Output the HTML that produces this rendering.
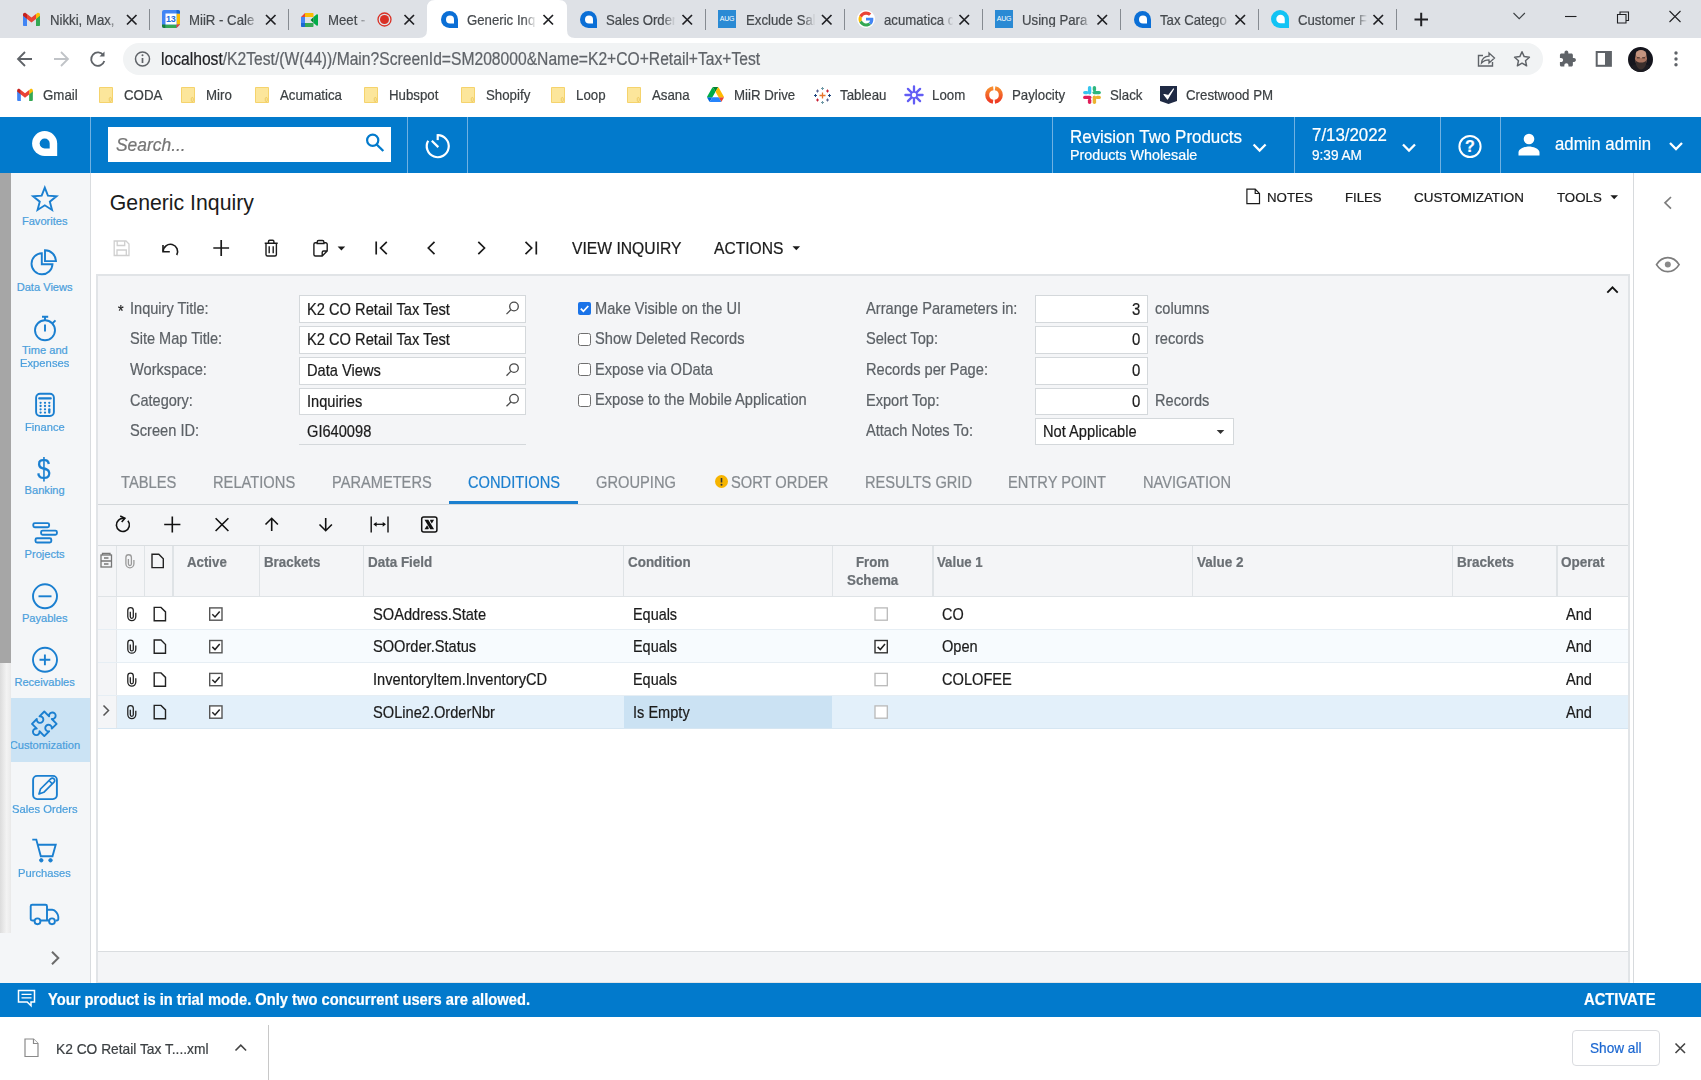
<!DOCTYPE html>
<html><head><meta charset="utf-8">
<style>
*{box-sizing:border-box;margin:0;padding:0}
html,body{width:1701px;height:1080px;overflow:hidden;background:#fff;font-family:"Liberation Sans",sans-serif;}
.abs{position:absolute}
.t{position:absolute;white-space:nowrap;line-height:1;-webkit-text-stroke:.22px}
svg{position:absolute;overflow:visible}
#tabstrip{left:0;top:0;width:1701px;height:38px;background:#dee1e6}
.tabt{font-size:15px;color:#45494d;top:11.6px;overflow:hidden;transform:scaleX(.88);transform-origin:0 0;width:79px;-webkit-mask-image:linear-gradient(90deg,#000 calc(100% - 14px),transparent);mask-image:linear-gradient(90deg,#000 calc(100% - 14px),transparent)}
.sep{width:1px;height:21px;top:9px;background:#868b91}
.bm{font-size:15px;color:#3c4043;top:87px;transform:scaleX(.885);transform-origin:0 0}
#hdr{left:0;top:116px;width:1701px;height:57px;background:#027acc}
.hdiv{top:116px;width:1px;height:57px;background:rgba(255,255,255,.4)}
#side{left:0;top:173px;width:90px;height:810px;background:#f5f6f8}
.sl{position:absolute;font-size:12.5px;color:#3d9ad9;text-align:center;width:90px;left:0;line-height:13px;white-space:nowrap}
.lbl{font-size:16px;color:#5a6065}
.val{font-size:16px;color:#1c1c1c}
.inp{position:absolute;background:#fff;border:1px solid #d4d8dc;height:28px}
.tab{font-size:16px;color:#878d92;top:474px}
.th{font-size:14px;font-weight:bold;color:#6a7075;top:555px}
.td{font-size:16px;color:#1c1c1c}
</style></head><body>
<div id="tabstrip" class="abs"></div>
<!-- active tab -->
<svg style="left:419px;top:0" width="156" height="38" viewBox="0 0 156 38"><path d="M0 38 Q8 38 8 30 L8 8 Q8 0 16 0 L140 0 Q148 0 148 8 L148 30 Q148 38 156 38 Z" fill="#fff"/></svg>
<!-- separators -->
<div class="abs sep" style="left:149px"></div><div class="abs sep" style="left:288px"></div>
<div class="abs sep" style="left:705px"></div><div class="abs sep" style="left:844px"></div><div class="abs sep" style="left:982px"></div>
<div class="abs sep" style="left:1120px"></div><div class="abs sep" style="left:1258px"></div><div class="abs sep" style="left:1395.500px"></div>
<!-- tab titles -->
<div class="t tabt" style="left:50px;" id="tt1">Nikki, Max,</div>
<div class="t tabt" style="left:189px;" id="tt2">MiiR - Cale</div>
<div class="t tabt" style="left:328px;width:46px" id="tt3">Meet -</div>
<div class="t tabt" style="left:467px;" id="tt4">Generic Inq</div>
<div class="t tabt" style="left:606px;" id="tt5">Sales Order</div>
<div class="t tabt" style="left:746px;" id="tt6">Exclude Sal</div>
<div class="t tabt" style="left:884px;" id="tt7">acumatica c</div>
<div class="t tabt" style="left:1022px;" id="tt8">Using Para</div>
<div class="t tabt" style="left:1160px;" id="tt9">Tax Catego</div>
<div class="t tabt" style="left:1298px;" id="tt10">Customer F</div>
<!-- tab close X's -->
<svg style="left:0;top:0" width="1701" height="38" viewBox="0 0 1701 38" fill="none" stroke="#202124" stroke-width="1.7">
<g id="xs">
<path d="M127 15l9.5 9.5M136.5 15l-9.5 9.5"/>
<path d="M266 15l9.5 9.5M275.5 15l-9.5 9.5"/>
<path d="M404.5 15l9.5 9.5M414 15l-9.5 9.5"/>
<path d="M543.5 15l9.5 9.5M553 15l-9.5 9.5"/>
<path d="M682.5 15l9.5 9.5M692 15l-9.5 9.5"/>
<path d="M822 15l9.5 9.5M831.5 15l-9.5 9.5"/>
<path d="M959.5 15l9.5 9.5M969 15l-9.5 9.5"/>
<path d="M1097.5 15l9.5 9.5M1107 15l-9.5 9.5"/>
<path d="M1235.5 15l9.5 9.5M1245 15l-9.5 9.5"/>
<path d="M1373.5 15l9.5 9.5M1383 15l-9.5 9.5"/>
</g>
<!-- new tab plus -->
<path d="M1414.5 19.5h13.5M1421.2 12.7v13.5" stroke-width="2"/>
<!-- window controls -->
<path d="M1513.5 13l5.7 5.7 5.7-5.7" stroke-width="1.1" stroke="#3c4043"/>
<path d="M1565 16.5h11.5" stroke-width="1.1"/>
<path d="M1617.5 14.5h8.5v8.5h-8.5zM1620 14.5v-2.5h8.5v8.5h-2.5" stroke-width="1.1"/>
<path d="M1669.5 11l11 11M1680.5 11l-11 11" stroke-width="1.1"/>
</svg>
<!-- Gmail icon tab1 -->
<svg style="left:23px;top:13px" width="17" height="13" viewBox="0 0 17 13"><path d="M0 1.5v10.5c0 .6.4 1 1 1h3V5.5z" fill="#4285f4"/><path d="M13 13h3c.6 0 1-.4 1-1V1.500l-4 4z" fill="#34a853"/><path d="M13 1l0 5 4-3.200V1.600c0-1.500-1.700-2.300-2.900-1.400z" fill="#fbbc04"/><path d="M4 6V1l4.500 3.500L13 1v5l-4.500 3.500z" fill="#ea4335"/><path d="M0 1.600v1.200l4 3.200V1L2.900.2C1.700-.7 0 .1 0 1.600z" fill="#c5221f"/></svg>
<!-- Calendar icon tab2 -->
<svg style="left:162px;top:10px" width="18" height="18" viewBox="0 0 18 18"><path d="M2 0h14a2 2 0 0 1 2 2v12.500l-3.500 3.500H2a2 2 0 0 1-2-2V2a2 2 0 0 1 2-2z" fill="#4285f4"/><rect x="14.500" y="3.500" width="3.500" height="11" fill="#fbbc04"/><rect x="3.500" y="14.500" width="11" height="3.500" fill="#34a853"/><path d="M0 14.500h3.500v3.500H2a2 2 0 0 1-2-2z" fill="#188038"/><path d="M14.500 18l3.500-3.500h-3.500z" fill="#ea4335"/><path d="M14.500 0H16a2 2 0 0 1 2 2v1.500h-3.500z" fill="#1967d2"/><rect x="3.500" y="3.500" width="11" height="11" fill="#fff"/><text x="8.800" y="12.400" font-size="9" font-weight="bold" fill="#1a6be0" text-anchor="middle" font-family="Liberation Sans" letter-spacing="-0.300">13</text></svg>
<!-- Meet icon tab3 -->
<svg style="left:301px;top:12.700px" width="17" height="14" viewBox="0 0 17 14"><path d="M0 4h4V0z" fill="#ea4335"/><path d="M4 0h7.500c.6 0 1 .4 1 1v3H4z" fill="#fbbc04"/><path d="M0 4h4v6H0z" fill="#4285f4"/><path d="M0 10h4v4H1c-.6 0-1-.4-1-1z" fill="#1967d2"/><path d="M4 10h8.500v3c0 .6-.4 1-1 1H4z" fill="#34a853"/><path d="M4 4h8.500v6H4z" fill="#fff" opacity="0"/><path d="M12.500 4v6l3.300 2.700c.5.400 1.200 0 1.200-.6V1.900c0-.6-.7-1-1.200-.6z" fill="#00ac47"/><path d="M9.500 7l3-3v6z" fill="#00832d"/></svg>
<!-- record dot -->
<svg style="left:377px;top:12px" width="15" height="15" viewBox="0 0 15 15"><circle cx="7.500" cy="7.500" r="6.500" fill="none" stroke="#d93025" stroke-width="1.300"/><circle cx="7.500" cy="7.500" r="4.500" fill="#d93025"/></svg>
<!-- Acumatica tab icons -->
<svg style="left:441px;top:11px" width="17" height="17" viewBox="0 0 17 17"><path d="M8.500 0A8.500 8.500 0 1 0 8.500 17H17V8.500A8.500 8.500 0 0 0 8.500 0z" fill="#0b6fd6"/><path d="M9 4.500a4 4 0 1 0 0 8h4V8.500a4 4 0 0 0-4-4z" fill="#fff"/></svg>
<svg style="left:580px;top:11px" width="17" height="17" viewBox="0 0 17 17"><path d="M8.500 0A8.500 8.500 0 1 0 8.500 17H17V8.500A8.500 8.500 0 0 0 8.500 0z" fill="#0b6fd6"/><path d="M9 4.500a4 4 0 1 0 0 8h4V8.500a4 4 0 0 0-4-4z" fill="#fff"/></svg>
<svg style="left:1134px;top:11px" width="17" height="17" viewBox="0 0 17 17"><path d="M8.500 0A8.500 8.500 0 1 0 8.500 17H17V8.500A8.500 8.500 0 0 0 8.500 0z" fill="#0b6fd6"/><path d="M9 4.500a4 4 0 1 0 0 8h4V8.500a4 4 0 0 0-4-4z" fill="#fff"/></svg>
<svg style="left:1271px;top:10px" width="18" height="18" viewBox="0 0 17 17"><path d="M8.500 0A8.500 8.500 0 1 0 8.500 17H17V8.500A8.500 8.500 0 0 0 8.500 0z" fill="#12c3f4"/><path d="M9 4.500a4 4 0 1 0 0 8h4V8.500a4 4 0 0 0-4-4z" fill="#fff"/></svg>
<!-- AUG icons -->
<div class="abs" style="left:718px;top:10px;width:18px;height:18px;background:#2a8ad4;color:#fff;font-size:7px;line-height:18px;text-align:center;letter-spacing:-0.300px">AUG</div>
<div class="abs" style="left:995px;top:10px;width:18px;height:18px;background:#2a8ad4;color:#fff;font-size:7px;line-height:18px;text-align:center;letter-spacing:-0.300px">AUG</div>
<!-- Google G -->
<svg style="left:857px;top:10px" width="18" height="18" viewBox="0 0 48 48"><circle cx="24" cy="24" r="24" fill="#fff"/><path fill="#EA4335" d="M24 12.500c3.100 0 5.900 1.100 8.100 3.100l6-6C34.500 6.200 29.600 4 24 4 16.200 4 9.500 8.500 6.200 15l7 5.400c1.700-4.600 5.900-7.900 10.800-7.900z"/><path fill="#4285F4" d="M43.600 24.500c0-1.400-.1-2.700-.4-4H24v7.600h11c-.5 2.500-1.900 4.700-4.100 6.100l6.700 5.200c3.900-3.600 6-8.900 6-14.900z"/><path fill="#FBBC05" d="M13.200 27.600c-.4-1.200-.7-2.400-.7-3.600s.2-2.500.7-3.600l-7-5.400C4.800 17.800 4 20.800 4 24s.8 6.200 2.200 9z"/><path fill="#34A853" d="M24 44c5.400 0 10-1.800 13.300-4.800l-6.700-5.200c-1.800 1.200-4.100 2-6.600 2-5 0-9.200-3.400-10.800-7.900l-7 5.400C9.500 39.500 16.200 44 24 44z"/></svg>
<!-- toolbar -->
<div class="abs" style="left:123px;top:43px;width:1420px;height:32px;border-radius:16px;background:#f1f3f4"></div>
<svg style="left:0;top:38px" width="1701" height="42" viewBox="0 38 1701 42" fill="none" stroke="#5f6368" stroke-width="1.8">
<!-- back -->
<path d="M32 59H18.500M25 52l-7 7 7 7"/>
<!-- forward -->
<path d="M54 59h13.500M61 52l7 7-7 7" stroke="#c0c3c7"/>
<!-- reload -->
<path d="M103.500 55.500A6.700 6.700 0 1 0 104.300 61" /><path d="M104.500 51.500v5h-5z" fill="#5f6368" stroke="none"/>
<!-- info -->
<circle cx="142.500" cy="59" r="7" stroke-width="1.500"/><path d="M142.500 58v5" stroke-width="1.700"/><circle cx="142.500" cy="55.300" r="1" fill="#5f6368" stroke="none"/>
<!-- share -->
<path d="M1483 55.500h-4.500v10.500h14v-4" stroke-width="1.400"/><path d="M1481.500 63c.5-4.500 3.500-6.700 7.500-6.800v-3.200l5.500 5-5.500 5v-3.200c-3.500 0-5.500 1-7.500 3.200z" stroke-width="1.300"/>
<!-- star -->
<path d="M1522 51.800l2.200 4.800 5.200.6-3.900 3.500 1.100 5.100-4.600-2.600-4.600 2.600 1.100-5.100-3.900-3.500 5.200-.6z" stroke-width="1.500" stroke-linejoin="round"/>
<!-- puzzle -->
<g transform="translate(1558.400 49.700) scale(.762)"><path d="M20.500 11H19V7c0-1.100-.9-2-2-2h-4V3.500C13 2.120 11.880 1 10.500 1S8 2.120 8 3.500V5H4c-1.100 0-1.990.9-1.990 2v3.800H3.500c1.490 0 2.700 1.210 2.700 2.700s-1.210 2.700-2.700 2.700H2V20c0 1.100.9 2 2 2h3.800v-1.500c0-1.490 1.210-2.700 2.700-2.700 1.490 0 2.700 1.210 2.700 2.700V22H17c1.100 0 2-.9 2-2v-4h1.500c1.380 0 2.500-1.120 2.500-2.500S21.880 11 20.500 11z" fill="#5f6368" stroke="none"/></g>
<!-- side panel -->
<rect x="1596.700" y="52" width="14.200" height="13.800" stroke-width="2"/><rect x="1605" y="52" width="6" height="13.800" fill="#5f6368" stroke="none"/>
<!-- kebab -->
<g fill="#5f6368" stroke="none"><circle cx="1676" cy="53" r="1.700"/><circle cx="1676" cy="59" r="1.700"/><circle cx="1676" cy="64.800" r="1.700"/></g>
</svg>
<!-- avatar -->
<svg style="left:1627.700px;top:46.500px" width="25" height="25" viewBox="0 0 25 25"><defs><clipPath id="avc"><circle cx="12.500" cy="12.500" r="12.500"/></clipPath></defs><g clip-path="url(#avc)"><rect width="25" height="25" fill="#15151d"/><path d="M0 25c1-5 4-7 8-8h9c4 1 7 3 8 8z" fill="#1d1c22"/><ellipse cx="13" cy="11.500" rx="6" ry="8" fill="#a8735f"/><ellipse cx="13" cy="7" rx="5.300" ry="4" fill="#c49480"/><path d="M7.300 13c.5 6 2.700 9.500 5.700 9.500s5.200-3.500 5.700-9.500c-1.500 2-3.300 2.500-5.700 2.500s-4.200-.5-5.700-2.500z" fill="#3a2e2c"/><path d="M9 10.800h2.800M14.200 10.800H17" stroke="#3a2a26" stroke-width="1"/></g></svg>
<!-- URL -->
<div class="t" style="left:161px;top:51px;font-size:17.500px;color:#5f6368;transform:scaleX(.894);transform-origin:0 0"><span style="color:#202124">localhost</span>/K2Test/(W(44))/Main?ScreenId=SM208000&amp;Name=K2+CO+Retail+Tax+Test</div>
<!-- bookmarks -->
<svg style="left:17px;top:89px" width="16" height="12" viewBox="0 0 17 13"><path d="M0 1.500v10.500c0 .6.400 1 1 1h3V5.500z" fill="#4285f4"/><path d="M13 13h3c.6 0 1-.4 1-1V1.500l-4 4z" fill="#34a853"/><path d="M13 1l0 5 4-3.200V1.600c0-1.500-1.700-2.300-2.900-1.400z" fill="#fbbc04"/><path d="M4 6V1l4.500 3.500L13 1v5l-4.500 3.500z" fill="#ea4335"/><path d="M0 1.600v1.200l4 3.200V1L2.900.2C1.700-.7 0 .1 0 1.600z" fill="#c5221f"/></svg>
<div class="t bm" style="left:43px">Gmail</div>
<svg style="left:98.5px;top:87px" width="14" height="16" viewBox="0 0 14 16"><path d="M.5 .5h8.500l4.500 0v15h-13z" fill="#fce69b" stroke="#f5d36c" stroke-width="1"/><rect x="10.300" y="10.500" width="2" height="4" rx="1" fill="none" stroke="#e8c24f" stroke-width=".7"/></svg>
<div class="t bm" style="left:123.5px">CODA</div>
<svg style="left:181px;top:87px" width="14" height="16" viewBox="0 0 14 16"><path d="M.5 .5h8.500l4.500 0v15h-13z" fill="#fce69b" stroke="#f5d36c" stroke-width="1"/><rect x="10.300" y="10.500" width="2" height="4" rx="1" fill="none" stroke="#e8c24f" stroke-width=".7"/></svg>
<div class="t bm" style="left:206px">Miro</div>
<svg style="left:255px;top:87px" width="14" height="16" viewBox="0 0 14 16"><path d="M.5 .5h8.500l4.500 0v15h-13z" fill="#fce69b" stroke="#f5d36c" stroke-width="1"/><rect x="10.300" y="10.500" width="2" height="4" rx="1" fill="none" stroke="#e8c24f" stroke-width=".7"/></svg>
<div class="t bm" style="left:279.5px">Acumatica</div>
<svg style="left:363.5px;top:87px" width="14" height="16" viewBox="0 0 14 16"><path d="M.5 .5h8.500l4.500 0v15h-13z" fill="#fce69b" stroke="#f5d36c" stroke-width="1"/><rect x="10.300" y="10.500" width="2" height="4" rx="1" fill="none" stroke="#e8c24f" stroke-width=".7"/></svg>
<div class="t bm" style="left:388.5px">Hubspot</div>
<svg style="left:460.5px;top:87px" width="14" height="16" viewBox="0 0 14 16"><path d="M.5 .5h8.500l4.500 0v15h-13z" fill="#fce69b" stroke="#f5d36c" stroke-width="1"/><rect x="10.300" y="10.500" width="2" height="4" rx="1" fill="none" stroke="#e8c24f" stroke-width=".7"/></svg>
<div class="t bm" style="left:485.5px">Shopify</div>
<svg style="left:550.5px;top:87px" width="14" height="16" viewBox="0 0 14 16"><path d="M.5 .5h8.500l4.500 0v15h-13z" fill="#fce69b" stroke="#f5d36c" stroke-width="1"/><rect x="10.300" y="10.500" width="2" height="4" rx="1" fill="none" stroke="#e8c24f" stroke-width=".7"/></svg>
<div class="t bm" style="left:576px">Loop</div>
<svg style="left:626.5px;top:87px" width="14" height="16" viewBox="0 0 14 16"><path d="M.5 .5h8.500l4.500 0v15h-13z" fill="#fce69b" stroke="#f5d36c" stroke-width="1"/><rect x="10.300" y="10.500" width="2" height="4" rx="1" fill="none" stroke="#e8c24f" stroke-width=".7"/></svg>
<div class="t bm" style="left:652px">Asana</div>
<svg style="left:707px;top:87px" width="17" height="15" viewBox="0 0 87.3 78"><path d="m6.600 66.850 3.850 6.650c.8 1.400 1.950 2.500 3.300 3.300l13.750-23.800h-27.500c0 1.550.4 3.100 1.200 4.500z" fill="#0066da"/><path d="m43.650 25-13.750-23.800c-1.350.8-2.500 1.900-3.300 3.300l-25.400 44a9.060 9.060 0 0 0 -1.200 4.500h27.500z" fill="#00ac47"/><path d="m73.550 76.800c1.350-.8 2.500-1.900 3.300-3.300l1.600-2.750 7.650-13.250c.8-1.400 1.200-2.950 1.200-4.500h-27.502l5.852 11.500z" fill="#ea4335"/><path d="m43.650 25 13.750-23.800c-1.350-.8-2.900-1.200-4.500-1.200h-18.500c-1.600 0-3.150.45-4.500 1.200z" fill="#00832d"/><path d="m59.800 53h-32.300l-13.750 23.800c1.350.8 2.900 1.200 4.500 1.200h50.800c1.600 0 3.150-.45 4.500-1.200z" fill="#2684fc"/><path d="m73.400 26.500-12.700-22c-.8-1.400-1.950-2.500-3.300-3.300l-13.750 23.800 16.150 28h27.450c0-1.550-.4-3.100-1.200-4.500z" fill="#ffba00"/></svg>
<div class="t bm" style="left:733.5px">MiiR Drive</div>
<svg style="left:814px;top:87px" width="17" height="17" viewBox="0 0 17 17" fill="none"><path d="M8.500 5.500v6M5.500 8.500h6" stroke="#e8762d" stroke-width="1.300"/><path d="M8.500 0v3M7 1.500h3M8.500 14v3M7 15.500h3" stroke="#7099a6" stroke-width="1"/><path d="M1.500 7v3M0 8.500h3M15.500 7v3M14 8.500h3" stroke="#1f457e" stroke-width="1"/><path d="M3.500 2.500v3M2 4h3M13.500 11.500v3M12 13h3" stroke="#5b6591" stroke-width="1"/><path d="M13.500 2.500v3M12 4h3M3.500 11.500v3M2 13h3" stroke="#c72035" stroke-width="1"/></svg>
<div class="t bm" style="left:840px">Tableau</div>
<svg style="left:904.5px;top:86px" width="18" height="18" viewBox="0 0 18 18" fill="none"><path d="M12.00 9.00L17.60 9.00M11.12 11.12L15.08 15.08M9.00 12.00L9.00 17.60M6.88 11.12L2.92 15.08M6.00 9.00L0.40 9.00M6.88 6.88L2.92 2.92M9.00 6.00L9.00 0.40M11.12 6.88L15.08 2.92" stroke="#625df5" stroke-width="2.300" stroke-linecap="round"/><circle cx="9" cy="9" r="3" fill="#fff" stroke="#625df5" stroke-width="1.600"/></svg>
<div class="t bm" style="left:932px">Loom</div>
<svg style="left:985px;top:86px" width="18" height="18" viewBox="0 0 18 18"><defs><linearGradient id="pg" x1="0" y1="0" x2="0" y2="1"><stop offset="0" stop-color="#f78b2d"/><stop offset="1" stop-color="#ee3a24"/></linearGradient></defs><circle cx="9" cy="9" r="6.800" fill="none" stroke="url(#pg)" stroke-width="4" stroke-dasharray="19.500 1.860" stroke-dashoffset="9.750"/></svg>
<div class="t bm" style="left:1012px">Paylocity</div>
<svg style="left:1083px;top:86px" width="18" height="18" viewBox="0 0 18 18" fill="none" stroke-width="3.400" stroke-linecap="round"><path d="M6.600 1.800v5" stroke="#36c5f0"/><path d="M1.800 6.600h2" stroke="#36c5f0"/><path d="M11.400 1.800v2" stroke="#2eb67d"/><path d="M11.200 6.600h5" stroke="#2eb67d"/><path d="M11.400 11.200v5" stroke="#ecb22e"/><path d="M14.200 11.400h2" stroke="#ecb22e"/><path d="M1.800 11.400h5" stroke="#e01e5a"/><path d="M6.600 14.200v2" stroke="#e01e5a"/></svg>
<div class="t bm" style="left:1110px">Slack</div>
<svg style="left:1160px;top:86px" width="17" height="18" viewBox="0 0 17 18"><path d="M0 0h17v15l-8.500 3L0 15z" fill="#1f2a44"/><path d="M4 8.500l3.500 4.500L13.500 3l-5 6.500z" fill="#fff" stroke="#fff" stroke-width="1.200" stroke-linejoin="round"/></svg>
<div class="t bm" style="left:1186px">Crestwood PM</div>
<!-- ACU HEADER -->
<div class="abs" style="left:0px;top:116.5px;width:1701px;height:56.5px;background:#027acc;"></div>
<div class="abs" style="left:89.5px;top:116.5px;width:1.3px;height:56.5px;background:#6fb1e2;"></div>
<div class="abs" style="left:407px;top:116.5px;width:1.3px;height:56.5px;background:#6fb1e2;"></div>
<div class="abs" style="left:467px;top:116.5px;width:1.3px;height:56.5px;background:#6fb1e2;"></div>
<div class="abs" style="left:1052px;top:116.5px;width:1.3px;height:56.5px;background:#6fb1e2;"></div>
<div class="abs" style="left:1294px;top:116.5px;width:1.3px;height:56.5px;background:#6fb1e2;"></div>
<div class="abs" style="left:1440px;top:116.5px;width:1.3px;height:56.5px;background:#6fb1e2;"></div>
<div class="abs" style="left:1499.5px;top:116.5px;width:1.3px;height:56.5px;background:#6fb1e2;"></div>
<svg style="left:31.7px;top:131.4px" width="25.2" height="25" viewBox="0 0 25.2 25"><path d="M12.600 0A12.500 12.500 0 1 0 12.600 25H25.200V12.500A12.600 12.500 0 0 0 12.600 0z" fill="#fff"/><path d="M12.700 7.500a5 5 0 1 0 0 10h5v-5a5 5 0 0 0-5-5z" fill="#027acc"/></svg>
<div class="abs" style="left:108px;top:127.3px;width:283px;height:34.7px;background:#fff;"></div>
<div class="t" style="left:115.9px;top:135px;line-height:20px;font-size:17.5px;color:#757575;font-style:italic;transform:scaleX(0.9952);transform-origin:0 0;">Search...</div>
<svg style="left:360px;top:130px" width="30" height="30" viewBox="360 130 30 30" fill="none" stroke="#027acc" stroke-width="2.200"><circle cx="372.700" cy="140.300" r="5.600"/><path d="M376.700 144.500l6.600 6.500" stroke-width="2.400"/></svg>
<svg style="left:420px;top:130px" width="36" height="34" viewBox="420 130 36 34" fill="none" stroke="#fff" stroke-width="2.200"><path d="M437.700 135.200A11 11 0 1 1 428.200 140.700"/><path d="M437.700 134.100v6"/><path d="M431.800 140.800l6.500 6.300"/></svg>
<div class="t" style="left:1070.3px;top:127px;line-height:20px;font-size:17.5px;color:#fff;transform:scaleX(0.9675);transform-origin:0 0;">Revision Two Products</div>
<div class="t" style="left:1070.3px;top:147px;line-height:16px;font-size:14.4px;color:#fff;transform:scaleX(0.9948);transform-origin:0 0;">Products Wholesale</div>
<div class="t" style="left:1312.0px;top:125px;line-height:20px;font-size:17.5px;color:#fff;transform:scaleX(0.9633);transform-origin:0 0;">7/13/2022</div>
<div class="t" style="left:1312.0px;top:147px;line-height:16px;font-size:14.4px;color:#fff;transform:scaleX(0.9464);transform-origin:0 0;">9:39 AM</div>
<div class="t" style="left:1555.0px;top:134px;line-height:20px;font-size:17.5px;color:#fff;transform:scaleX(0.9582);transform-origin:0 0;">admin admin</div>
<svg style="left:1040px;top:116px" width="661" height="57" viewBox="1040 116 661 57" fill="none" stroke="#fff" stroke-width="2.300"><path d="M1253.6 144.5l6 6 6-6"/><path d="M1403 144.5l6 6 6-6"/><path d="M1670 143l6 6 6-6"/><circle cx="1470" cy="146.500" r="10.600" stroke-width="2"/></svg>
<div class="t" style="left:1465.1px;top:138px;line-height:17px;font-size:16px;color:#fff;font-weight:700;">?</div>
<svg style="left:1517px;top:132px" width="24" height="24" viewBox="0 0 24 24" fill="#fff"><circle cx="12" cy="7" r="5.300"/><path d="M1.500 23.500v-3c0-4 7-6 10.500-6s10.500 2 10.500 6v3z"/></svg>
<!-- SIDEBAR -->
<div class="abs" style="left:0px;top:173px;width:90px;height:810px;background:#f4f6f8;"></div>
<div class="abs" style="left:89.5px;top:173px;width:1.3px;height:810px;background:#d9dcdf;"></div>
<div class="abs" style="left:10.7px;top:698.2px;width:79px;height:63.8px;background:#cbe3f4;"></div>
<div class="abs" style="left:0px;top:173px;width:10.7px;height:490px;background:#a6a6a6;"></div>
<div class="abs" style="left:0px;top:663px;width:10.7px;height:269.5px;background:linear-gradient(90deg,#dcdcdc,#f3f3f3 60%,#e9e9e9);"></div>
<div class="t" style="left:21.9px;top:215px;line-height:12px;font-size:11.1px;color:#4b9fdc;">Favorites</div>
<div class="t" style="left:16.7px;top:281px;line-height:12px;font-size:11.1px;color:#4b9fdc;">Data Views</div>
<div class="t" style="left:21.9px;top:344px;line-height:12px;font-size:11.1px;color:#4b9fdc;">Time and</div>
<div class="t" style="left:20.0px;top:357px;line-height:12px;font-size:11.1px;color:#4b9fdc;transform:scaleX(1.0134);transform-origin:0 0;">Expenses</div>
<div class="t" style="left:24.6px;top:421px;line-height:12px;font-size:11.1px;color:#4b9fdc;transform:scaleX(1.0078);transform-origin:0 0;">Finance</div>
<div class="t" style="left:24.6px;top:484px;line-height:12px;font-size:11.1px;color:#4b9fdc;">Banking</div>
<div class="t" style="left:24.6px;top:548px;line-height:12px;font-size:11.1px;color:#4b9fdc;">Projects</div>
<div class="t" style="left:21.9px;top:612px;line-height:12px;font-size:11.1px;color:#4b9fdc;">Payables</div>
<div class="t" style="left:14.4px;top:676px;line-height:12px;font-size:11.1px;color:#4b9fdc;">Receivables</div>
<div class="abs" style="left:10.7px;top:735px;width:79px;height:20px;overflow:hidden"><div class="t" style="left:-0.9px;top:4px;line-height:12px;font-size:11.1px;color:#4b9fdc;">Customization</div></div>
<div class="t" style="left:11.7px;top:803px;line-height:12px;font-size:11.1px;color:#4b9fdc;transform:scaleX(1.0143);transform-origin:0 0;">Sales Orders</div>
<div class="t" style="left:18.1px;top:867px;line-height:12px;font-size:11.1px;color:#4b9fdc;transform:scaleX(1.0087);transform-origin:0 0;">Purchases</div>
<svg style="left:0;top:173px" width="90" height="810" viewBox="0 173 90 810" fill="none" stroke="#1a7fd0" stroke-width="1.900" stroke-linejoin="miter"><path d="M44.80 187.70L47.92 195.71L56.50 196.20L49.84 201.64L52.03 209.95L44.80 205.30L37.57 209.95L39.76 201.64L33.10 196.20L41.68 195.71Z"/><path d="M41.800 253.300A10.500 10.500 0 1 0 52.500 264.300H41.800z"/><path d="M45 250.300v10.800h11A11 11 0 0 0 45 250.300z"/><circle cx="45" cy="330.300" r="10"/><path d="M42 316.800h6.200M45 316.800v3.500M45 324.500v7M52.500 323.200l3-2.800"/><rect x="36.100" y="393.700" width="17.800" height="22.300" rx="4"/><path d="M39.300 398.400h11.400" stroke-width="2.300" stroke-linecap="round"/><g fill="#1a7fd0" stroke="none"><circle cx="40.6" cy="402.8" r="1.150"/><circle cx="40.6" cy="406" r="1.150"/><circle cx="40.6" cy="409.3" r="1.150"/><circle cx="40.6" cy="412.6" r="1.150"/><circle cx="45" cy="402.8" r="1.150"/><circle cx="45" cy="406" r="1.150"/><circle cx="45" cy="409.3" r="1.150"/><circle cx="45" cy="412.6" r="1.150"/><circle cx="49.300" cy="402.800" r="1.150"/><circle cx="49.300" cy="406" r="1.150"/><rect x="48.150" y="408.200" width="2.300" height="5.500" rx="1.150"/></g><rect x="33.300" y="523.100" width="15.800" height="4.200" rx="1.500"/><rect x="41.100" y="530.600" width="15.800" height="4.200" rx="1.500"/><rect x="35.500" y="538.300" width="15.800" height="4.200" rx="1.500"/><circle cx="45" cy="596.300" r="12"/><path d="M38.500 596.300h13"/><circle cx="45" cy="659.800" r="12"/><path d="M39.500 659.800h10.800M44.900 654.400v10.800"/><g transform="translate(44.300 723.800) rotate(45)"><path d="M-8.700 -8.700H-1.900A3.300 3.300 0 1 1 1.900 -8.700H8.700V-1.900A3.300 3.300 0 1 0 8.700 1.900V8.700H1.900A3.300 3.300 0 1 1 -1.900 8.700H-8.700V1.900A3.300 3.300 0 1 0 -8.700 -1.900Z" stroke-width="1.900" stroke-linejoin="round"/></g><rect x="33.100" y="775.900" width="23.800" height="23.200" rx="4"/><path d="M39 794l1.500-5 10.200-10.200a2.300 2.300 0 0 1 3.300 3.300L43.800 792.300zM49 780.500l3.300 3.300" stroke-width="1.700" stroke-linejoin="round"/><path d="M32.300 839.600h4l4.500 16.700h11.700l3.200-11.500H38"/><circle cx="41.300" cy="860.300" r="1.700" fill="#1a7fd0" stroke-width="1"/><circle cx="50.500" cy="860.300" r="1.700" fill="#1a7fd0" stroke-width="1"/><path d="M34.500 920.500h-2.300a1.500 1.500 0 0 1-1.500-1.500v-12.700a1.500 1.500 0 0 1 1.500-1.500h13.300a1.500 1.500 0 0 1 1.500 1.500v14.200h-6.500M47 909.800h5.300c3 0 6 4.500 6 7v2.200a1.500 1.500 0 0 1-1.500 1.500h-1.200M49 920.500h-2"/><circle cx="37.500" cy="921.300" r="2.900"/><circle cx="52" cy="921.300" r="2.900"/><path d="M52 951.800l6.300 6.200-6.300 6.200" stroke="#6b6b6b" stroke-width="2"/></svg>
<div class="t" style="left:37.0px;top:452px;line-height:33px;font-size:30px;color:#1a7fd0;transform:scaleX(0.8151);transform-origin:0 0;">$</div>
<!-- MAIN -->
<div class="abs" style="left:1633px;top:173px;width:1.2px;height:810px;background:#d7dadd;"></div>
<div class="t" style="left:109.8px;top:191px;line-height:24px;font-size:21.25px;color:#1b1b1b;-webkit-text-stroke:0;">Generic Inquiry</div>
<div class="t" style="left:1266.5px;top:190px;line-height:15px;font-size:13.6px;color:#1b1b1b;transform:scaleX(0.9776);transform-origin:0 0;">NOTES</div>
<div class="t" style="left:1345.0px;top:190px;line-height:15px;font-size:13.6px;color:#1b1b1b;transform:scaleX(0.9684);transform-origin:0 0;">FILES</div>
<div class="t" style="left:1414.3px;top:190px;line-height:15px;font-size:13.6px;color:#1b1b1b;transform:scaleX(0.9881);transform-origin:0 0;">CUSTOMIZATION</div>
<div class="t" style="left:1556.9px;top:190px;line-height:15px;font-size:13.6px;color:#1b1b1b;transform:scaleX(0.9770);transform-origin:0 0;">TOOLS</div>
<div class="t" style="left:572.0px;top:239px;line-height:18px;font-size:16.25px;color:#1b1b1b;transform:scaleX(0.9650);transform-origin:0 0;">VIEW INQUIRY</div>
<div class="t" style="left:714.0px;top:239px;line-height:18px;font-size:16.25px;color:#1b1b1b;transform:scaleX(0.9622);transform-origin:0 0;">ACTIONS</div>
<svg style="left:90px;top:173px" width="1611" height="110" viewBox="90 173 1611 110" fill="none" stroke="#1b1b1b" stroke-width="1.500"><path d="M1246.900 189.200h8.300l4.300 4.300v10.200h-12.600zM1255.200 189.200v4.300h4.300" stroke-width="1.200"/><path d="M1610.4 195.3h7.6l-3.8 4z" fill="#1b1b1b" stroke="none"/><path d="M792.5 246.2h7.6l-3.8 4z" fill="#1b1b1b" stroke="none"/><path d="M337.59999999999997 246.4h7.6l-3.8 4z" fill="#1b1b1b" stroke="none"/><path d="M1671 197l-6 5.800 6 5.800" stroke="#7d7d7d" stroke-width="1.700"/><path d="M1656.500 264.600c3-4.800 7-7 11.300-7s8.300 2.200 11.300 7c-3 4.800-7 7-11.300 7s-8.300-2.200-11.300-7z" stroke="#7d7d7d" stroke-width="1.700"/><circle cx="1667.800" cy="264.600" r="3" fill="#8a8a8a" stroke="none"/><g stroke="#cfcfcf" stroke-width="1.300"><path d="M114.200 241h11.800l3 3v11.500h-14.800z"/><path d="M117.200 241v4.500h7.500v-4.500M117 255.500v-5.500h9.300v5.500"/></g><path d="M163.200 251.500a7.200 7.200 0 1 1 13.500 3.500" stroke-width="1.600"/><path d="M163 245v6.800h6.800" stroke-width="1.600"/><path d="M213.300 248h15.800M221.200 240v16" stroke-width="1.700"/><path d="M264.700 243.200h13M268.500 243v-1.500a1.200 1.200 0 0 1 1.200-1.200h3a1.200 1.200 0 0 1 1.200 1.200v1.500M266 243.500v11a1.500 1.500 0 0 0 1.500 1.500h7.400a1.500 1.500 0 0 0 1.500-1.500v-11M269.200 246.200v7M273.200 246.200v7" stroke-width="1.400"/><path d="M316.800 242.800h-1.400a1.500 1.500 0 0 0-1.500 1.500v10.200a1.500 1.500 0 0 0 1.500 1.500h6.800l5-5v-6.700a1.500 1.500 0 0 0-1.500-1.500h-1.400M317.200 243.500v-1.500a1.500 1.500 0 0 1 1.500-1.500h3.700a1.500 1.500 0 0 1 1.500 1.500v1.500zM322.200 256v-3.500a1.500 1.500 0 0 1 1.500-1.500h3.500" stroke-width="1.400"/><path d="M376.200 241.500v13M386.800 241.800l-6.200 6.200 6.200 6.200" stroke-width="1.700"/><path d="M434.500 241.800l-6.200 6.200 6.200 6.200" stroke-width="1.700"/><path d="M478.300 241.800l6.200 6.200-6.200 6.200" stroke-width="1.700"/><path d="M525.500 241.800l6.200 6.200-6.200 6.200M536.300 241.500v13" stroke-width="1.700"/></svg>
<div class="abs" style="left:96px;top:274px;width:1533.5px;height:709.5px;background:#f4f5f7;border:2px solid #e1e4e7;"></div>
<svg style="left:1600px;top:280px" width="24" height="20" viewBox="1600 280 24 20" fill="none" stroke="#111" stroke-width="1.900"><path d="M1607.300 292.600l5.200-5.200 5.200 5.200"/></svg>
<div class="t" style="left:129.7px;top:299px;line-height:19px;font-size:16.6px;color:#5c6166;transform:scaleX(0.8783);transform-origin:0 0;">Inquiry Title:</div>
<div class="t" style="left:129.7px;top:329px;line-height:19px;font-size:16.6px;color:#5c6166;transform:scaleX(0.8766);transform-origin:0 0;">Site Map Title:</div>
<div class="t" style="left:129.7px;top:360px;line-height:19px;font-size:16.6px;color:#5c6166;transform:scaleX(0.8805);transform-origin:0 0;">Workspace:</div>
<div class="t" style="left:129.7px;top:391px;line-height:19px;font-size:16.6px;color:#5c6166;transform:scaleX(0.8740);transform-origin:0 0;">Category:</div>
<div class="t" style="left:129.7px;top:421px;line-height:19px;font-size:16.6px;color:#5c6166;transform:scaleX(0.8811);transform-origin:0 0;">Screen ID:</div>
<div class="t" style="left:118.4px;top:302px;line-height:19px;font-size:16.6px;color:#1b1b1b;transform:scaleX(0.8669);transform-origin:0 0;">*</div>
<div class="abs" style="left:299.3px;top:295.40000000000003px;width:226.3px;height:27.5px;background:#fff;border:1px solid #d4d8db;"></div>
<div class="abs" style="left:299.3px;top:326.40000000000003px;width:226.3px;height:27.5px;background:#fff;border:1px solid #d4d8db;"></div>
<div class="abs" style="left:299.3px;top:357.0px;width:226.3px;height:27.5px;background:#fff;border:1px solid #d4d8db;"></div>
<div class="abs" style="left:299.3px;top:387.6px;width:226.3px;height:27.5px;background:#fff;border:1px solid #d4d8db;"></div>
<div class="abs" style="left:299.3px;top:444.2px;width:226.3px;height:1px;background:#d4d8db;"></div>
<div class="t" style="left:307.2px;top:300px;line-height:19px;font-size:16.6px;color:#1b1b1b;transform:scaleX(0.8840);transform-origin:0 0;">K2 CO Retail Tax Test</div>
<div class="t" style="left:307.2px;top:330px;line-height:19px;font-size:16.6px;color:#1b1b1b;transform:scaleX(0.8840);transform-origin:0 0;">K2 CO Retail Tax Test</div>
<div class="t" style="left:307.2px;top:361px;line-height:19px;font-size:16.6px;color:#1b1b1b;transform:scaleX(0.8822);transform-origin:0 0;">Data Views</div>
<div class="t" style="left:307.2px;top:392px;line-height:19px;font-size:16.6px;color:#1b1b1b;transform:scaleX(0.8813);transform-origin:0 0;">Inquiries</div>
<div class="t" style="left:307.2px;top:422px;line-height:19px;font-size:16.6px;color:#1b1b1b;transform:scaleX(0.8818);transform-origin:0 0;">GI640098</div>
<svg style="left:500px;top:290px" width="30" height="130" viewBox="500 290 30 130" fill="none" stroke="#4a4a4a" stroke-width="1.300"><circle cx="514" cy="306.5" r="4.300"/><path d="M510.800 309.8l-4.300 4.300"/><circle cx="514" cy="368.1" r="4.300"/><path d="M510.800 371.40000000000003l-4.300 4.300"/><circle cx="514" cy="398.7" r="4.300"/><path d="M510.800 402.0l-4.300 4.300"/></svg>
<svg style="left:577.700px;top:302.2px" width="13" height="13" viewBox="0 0 13 13"><rect width="13" height="13" rx="2" fill="#1a73e8"/><path d="M2.800 6.700l2.600 2.600 4.900-5.300" fill="none" stroke="#fff" stroke-width="1.800"/></svg>
<div class="t" style="left:595.4px;top:299px;line-height:19px;font-size:16.6px;color:#5c6166;transform:scaleX(0.8813);transform-origin:0 0;">Make Visible on the UI</div>
<div class="abs" style="left:577.7px;top:332.8px;width:13px;height:13px;background:#fff;border:1.300px solid #6f6f6f;border-radius:2.500px;"></div>
<div class="t" style="left:595.4px;top:329px;line-height:19px;font-size:16.6px;color:#5c6166;transform:scaleX(0.8811);transform-origin:0 0;">Show Deleted Records</div>
<div class="abs" style="left:577.7px;top:363.3px;width:13px;height:13px;background:#fff;border:1.300px solid #6f6f6f;border-radius:2.500px;"></div>
<div class="t" style="left:595.4px;top:360px;line-height:19px;font-size:16.6px;color:#5c6166;transform:scaleX(0.8812);transform-origin:0 0;">Expose via OData</div>
<div class="abs" style="left:577.7px;top:393.8px;width:13px;height:13px;background:#fff;border:1.300px solid #6f6f6f;border-radius:2.500px;"></div>
<div class="t" style="left:595.4px;top:390px;line-height:19px;font-size:16.6px;color:#5c6166;transform:scaleX(0.8827);transform-origin:0 0;">Expose to the Mobile Application</div>
<div class="t" style="left:865.5px;top:299px;line-height:19px;font-size:16.6px;color:#5c6166;transform:scaleX(0.8828);transform-origin:0 0;">Arrange Parameters in:</div>
<div class="t" style="left:865.5px;top:329px;line-height:19px;font-size:16.6px;color:#5c6166;transform:scaleX(0.8799);transform-origin:0 0;">Select Top:</div>
<div class="t" style="left:865.5px;top:360px;line-height:19px;font-size:16.6px;color:#5c6166;transform:scaleX(0.8814);transform-origin:0 0;">Records per Page:</div>
<div class="t" style="left:865.5px;top:391px;line-height:19px;font-size:16.6px;color:#5c6166;transform:scaleX(0.8785);transform-origin:0 0;">Export Top:</div>
<div class="t" style="left:865.5px;top:421px;line-height:19px;font-size:16.6px;color:#5c6166;transform:scaleX(0.8807);transform-origin:0 0;">Attach Notes To:</div>
<div class="abs" style="left:1035.3px;top:295.40000000000003px;width:113px;height:27.5px;background:#fff;border:1px solid #d4d8db;"></div>
<div class="abs" style="left:1035.3px;top:326.40000000000003px;width:113px;height:27.5px;background:#fff;border:1px solid #d4d8db;"></div>
<div class="abs" style="left:1035.3px;top:357.0px;width:113px;height:27.5px;background:#fff;border:1px solid #d4d8db;"></div>
<div class="abs" style="left:1035.3px;top:387.6px;width:113px;height:27.5px;background:#fff;border:1px solid #d4d8db;"></div>
<div class="t" style="left:1132.0px;top:300px;line-height:19px;font-size:16.6px;color:#1b1b1b;transform:scaleX(0.9000);transform-origin:0 0;">3</div>
<div class="t" style="left:1132.0px;top:330px;line-height:19px;font-size:16.6px;color:#1b1b1b;transform:scaleX(0.9000);transform-origin:0 0;">0</div>
<div class="t" style="left:1132.0px;top:361px;line-height:19px;font-size:16.6px;color:#1b1b1b;transform:scaleX(0.9000);transform-origin:0 0;">0</div>
<div class="t" style="left:1132.0px;top:392px;line-height:19px;font-size:16.6px;color:#1b1b1b;transform:scaleX(0.9000);transform-origin:0 0;">0</div>
<div class="t" style="left:1155.0px;top:299px;line-height:19px;font-size:16.6px;color:#5c6166;transform:scaleX(0.8784);transform-origin:0 0;">columns</div>
<div class="t" style="left:1155.0px;top:329px;line-height:19px;font-size:16.6px;color:#5c6166;transform:scaleX(0.8816);transform-origin:0 0;">records</div>
<div class="t" style="left:1155.0px;top:391px;line-height:19px;font-size:16.6px;color:#5c6166;transform:scaleX(0.8784);transform-origin:0 0;">Records</div>
<div class="abs" style="left:1035.3px;top:417.8px;width:198.3px;height:27.5px;background:#fff;border:1px solid #d4d8db;"></div>
<div class="t" style="left:1043.3px;top:422px;line-height:19px;font-size:16.6px;color:#1b1b1b;transform:scaleX(0.8829);transform-origin:0 0;">Not Applicable</div>
<svg style="left:1215px;top:428px" width="12" height="8" viewBox="0 0 12 8"><path d="M1.700 2h7.600l-3.800 4z" fill="#333"/></svg>
<div class="t" style="left:121.3px;top:473px;line-height:18px;font-size:16.25px;color:#868b90;transform:scaleX(0.9065);transform-origin:0 0;">TABLES</div>
<div class="t" style="left:212.9px;top:473px;line-height:18px;font-size:16.25px;color:#868b90;transform:scaleX(0.9043);transform-origin:0 0;">RELATIONS</div>
<div class="t" style="left:331.7px;top:473px;line-height:18px;font-size:16.25px;color:#868b90;transform:scaleX(0.9001);transform-origin:0 0;">PARAMETERS</div>
<div class="t" style="left:468.0px;top:473px;line-height:18px;font-size:16.25px;color:#1b7fcf;transform:scaleX(0.9018);transform-origin:0 0;">CONDITIONS</div>
<div class="t" style="left:596.3px;top:473px;line-height:18px;font-size:16.25px;color:#868b90;transform:scaleX(0.9030);transform-origin:0 0;">GROUPING</div>
<div class="t" style="left:730.8px;top:473px;line-height:18px;font-size:16.25px;color:#868b90;transform:scaleX(0.9039);transform-origin:0 0;">SORT ORDER</div>
<div class="t" style="left:864.5px;top:473px;line-height:18px;font-size:16.25px;color:#868b90;transform:scaleX(0.9000);transform-origin:0 0;">RESULTS GRID</div>
<div class="t" style="left:1008.0px;top:473px;line-height:18px;font-size:16.25px;color:#868b90;transform:scaleX(0.9019);transform-origin:0 0;">ENTRY POINT</div>
<div class="t" style="left:1142.5px;top:473px;line-height:18px;font-size:16.25px;color:#868b90;transform:scaleX(0.8997);transform-origin:0 0;">NAVIGATION</div>
<div class="abs" style="left:97.5px;top:503.8px;width:1530.5px;height:1.2px;background:#d3d7da;"></div>
<div class="abs" style="left:449.3px;top:501px;width:129px;height:3.3px;background:#1b7fcf;"></div>
<svg style="left:714.500px;top:474.500px" width="13" height="13" viewBox="0 0 13 13"><circle cx="6.500" cy="6.500" r="6.500" fill="#f6b400"/><path d="M6.500 3v4.500" stroke="#333" stroke-width="1.600"/><circle cx="6.500" cy="9.800" r="1" fill="#333"/></svg>
<!-- GRID -->
<svg style="left:97px;top:505px" width="1531" height="450" viewBox="97 505 1531 450" fill="none" stroke="#111" stroke-width="1.500"><path d="M127.900 520.800A6.500 6.500 0 1 1 124.300 518.600" stroke-width="1.600"/><path d="M120.200 516l4.700 2.300-3.200 3.700" stroke-width="1.600"/><path d="M164.200 524.500h16.200M172.300 516.400v16.200" stroke-width="1.600"/><path d="M215.600 518.200l12.800 12.800M228.400 518.200l-12.800 12.800" stroke-width="1.600"/><path d="M271.700 531v-12.500M265.500 524.500l6.200-6.200 6.200 6.200" stroke-width="1.600"/><path d="M325.700 518v12.500M319.500 524.500l6.200 6.200 6.200-6.200" stroke-width="1.600"/><path d="M371.200 516.600v15.800M388 516.600v15.800" stroke-width="1.400"/><path d="M375 524.300h9.500" stroke-width="1.300"/><path d="M373.300 524.300l3.300-2.400v4.800zM386 524.300l-3.300-2.400v4.800z" fill="#111" stroke="none"/><rect x="421.700" y="517" width="15.200" height="15" rx="2" stroke-width="1.500"/><path d="M424.500 519.800h3.800l5.800 9.500h-3.800zM430.300 519.800h3.800l-2.300 3.600-1.700-2.700zM424.500 529.300l2.600-4 1.800 2.900-.6 1.100z" fill="#111" stroke="none"/></svg>
<div class="abs" style="left:97.5px;top:545px;width:1530.5px;height:1.2px;background:#d9dde0;"></div>
<div class="abs" style="left:97.5px;top:596px;width:1530.5px;height:1.2px;background:#dfe3e6;"></div>
<div class="abs" style="left:98px;top:597.2px;width:1530px;height:354.3px;background:#fff;"></div>
<div class="abs" style="left:98px;top:597.2px;width:17.5px;height:131px;background:#f4f5f7;"></div>
<div class="abs" style="left:115.5px;top:546px;width:1.2px;height:50px;background:#dfe3e6;"></div>
<div class="abs" style="left:143.5px;top:546px;width:1.2px;height:50px;background:#dfe3e6;"></div>
<div class="abs" style="left:172.4px;top:546px;width:1.2px;height:50px;background:#dfe3e6;"></div>
<div class="abs" style="left:258.7px;top:546px;width:1.2px;height:50px;background:#dfe3e6;"></div>
<div class="abs" style="left:363px;top:546px;width:1.2px;height:50px;background:#dfe3e6;"></div>
<div class="abs" style="left:623px;top:546px;width:1.2px;height:50px;background:#dfe3e6;"></div>
<div class="abs" style="left:831.5px;top:546px;width:1.2px;height:50px;background:#dfe3e6;"></div>
<div class="abs" style="left:932.4px;top:546px;width:1.2px;height:50px;background:#dfe3e6;"></div>
<div class="abs" style="left:1192.3px;top:546px;width:1.2px;height:50px;background:#dfe3e6;"></div>
<div class="abs" style="left:1452.3px;top:546px;width:1.2px;height:50px;background:#dfe3e6;"></div>
<div class="abs" style="left:1556.4px;top:546px;width:1.2px;height:50px;background:#dfe3e6;"></div>
<div class="abs" style="left:115.5px;top:597px;width:1px;height:131px;background:#e4e7ea;"></div>
<div class="abs" style="left:116.5px;top:630.3px;width:1511.5px;height:31.8px;background:#f7fbfe;"></div>
<div class="abs" style="left:116.5px;top:695.9px;width:1511.5px;height:31.8px;background:#e3f0fa;"></div>
<div class="abs" style="left:623.5px;top:695.9px;width:208.5px;height:31.8px;background:#cbe2f3;"></div>
<div class="abs" style="left:97.5px;top:629.3px;width:1530.5px;height:1px;background:#e6eef4;"></div>
<div class="abs" style="left:97.5px;top:662.1px;width:1530.5px;height:1px;background:#e6eef4;"></div>
<div class="abs" style="left:97.5px;top:694.9px;width:1530.5px;height:1px;background:#e6eef4;"></div>
<div class="abs" style="left:97.5px;top:727.7px;width:1530.5px;height:1px;background:#e6eef4;"></div>
<div class="abs" style="left:97.5px;top:727.7px;width:1530.5px;height:1px;background:#d6e6f2;"></div>
<div class="abs" style="left:97.5px;top:951.3px;width:1530.5px;height:1.2px;background:#dadde0;"></div>
<div class="t" style="left:186.8px;top:554px;line-height:16px;font-size:14.5px;color:#6b7075;font-weight:700;transform:scaleX(0.9145);transform-origin:0 0;">Active</div>
<div class="t" style="left:264.3px;top:554px;line-height:16px;font-size:14.5px;color:#6b7075;font-weight:700;transform:scaleX(0.9189);transform-origin:0 0;">Brackets</div>
<div class="t" style="left:368.4px;top:554px;line-height:16px;font-size:14.5px;color:#6b7075;font-weight:700;transform:scaleX(0.9279);transform-origin:0 0;">Data Field</div>
<div class="t" style="left:628.4px;top:554px;line-height:16px;font-size:14.5px;color:#6b7075;font-weight:700;transform:scaleX(0.9254);transform-origin:0 0;">Condition</div>
<div class="t" style="left:856.3px;top:554px;line-height:16px;font-size:14.5px;color:#6b7075;font-weight:700;transform:scaleX(0.9131);transform-origin:0 0;">From</div>
<div class="t" style="left:847.4px;top:572px;line-height:16px;font-size:14.5px;color:#6b7075;font-weight:700;transform:scaleX(0.9224);transform-origin:0 0;">Schema</div>
<div class="t" style="left:937.0px;top:554px;line-height:16px;font-size:14.5px;color:#6b7075;font-weight:700;transform:scaleX(0.9124);transform-origin:0 0;">Value 1</div>
<div class="t" style="left:1197.0px;top:554px;line-height:16px;font-size:14.5px;color:#6b7075;font-weight:700;transform:scaleX(0.9324);transform-origin:0 0;">Value 2</div>
<div class="t" style="left:1457.0px;top:554px;line-height:16px;font-size:14.5px;color:#6b7075;font-weight:700;transform:scaleX(0.9304);transform-origin:0 0;">Brackets</div>
<div class="t" style="left:1561.0px;top:554px;line-height:16px;font-size:14.5px;color:#6b7075;font-weight:700;transform:scaleX(0.9329);transform-origin:0 0;">Operat</div>
<div class="t" style="left:372.8px;top:605px;line-height:19px;font-size:16.6px;color:#1b1b1b;transform:scaleX(0.8818);transform-origin:0 0;">SOAddress.State</div>
<div class="t" style="left:632.9px;top:605px;line-height:19px;font-size:16.6px;color:#1b1b1b;transform:scaleX(0.8688);transform-origin:0 0;">Equals</div>
<div class="t" style="left:941.7px;top:605px;line-height:19px;font-size:16.6px;color:#1b1b1b;transform:scaleX(0.8715);transform-origin:0 0;">CO</div>
<div class="t" style="left:1565.7px;top:605px;line-height:19px;font-size:16.6px;color:#1b1b1b;transform:scaleX(0.8768);transform-origin:0 0;">And</div>
<div class="t" style="left:372.8px;top:637px;line-height:19px;font-size:16.6px;color:#1b1b1b;transform:scaleX(0.8807);transform-origin:0 0;">SOOrder.Status</div>
<div class="t" style="left:632.9px;top:637px;line-height:19px;font-size:16.6px;color:#1b1b1b;transform:scaleX(0.8688);transform-origin:0 0;">Equals</div>
<div class="t" style="left:941.7px;top:637px;line-height:19px;font-size:16.6px;color:#1b1b1b;transform:scaleX(0.8791);transform-origin:0 0;">Open</div>
<div class="t" style="left:1565.7px;top:637px;line-height:19px;font-size:16.6px;color:#1b1b1b;transform:scaleX(0.8768);transform-origin:0 0;">And</div>
<div class="t" style="left:372.8px;top:670px;line-height:19px;font-size:16.6px;color:#1b1b1b;transform:scaleX(0.8823);transform-origin:0 0;">InventoryItem.InventoryCD</div>
<div class="t" style="left:632.9px;top:670px;line-height:19px;font-size:16.6px;color:#1b1b1b;transform:scaleX(0.8688);transform-origin:0 0;">Equals</div>
<div class="t" style="left:941.7px;top:670px;line-height:19px;font-size:16.6px;color:#1b1b1b;transform:scaleX(0.8811);transform-origin:0 0;">COLOFEE</div>
<div class="t" style="left:1565.7px;top:670px;line-height:19px;font-size:16.6px;color:#1b1b1b;transform:scaleX(0.8768);transform-origin:0 0;">And</div>
<div class="t" style="left:372.8px;top:703px;line-height:19px;font-size:16.6px;color:#1b1b1b;transform:scaleX(0.8815);transform-origin:0 0;">SOLine2.OrderNbr</div>
<div class="t" style="left:632.9px;top:703px;line-height:19px;font-size:16.6px;color:#1b1b1b;transform:scaleX(0.8781);transform-origin:0 0;">Is Empty</div>
<div class="t" style="left:1565.7px;top:703px;line-height:19px;font-size:16.6px;color:#1b1b1b;transform:scaleX(0.8768);transform-origin:0 0;">And</div>
<svg style="left:97px;top:545px" width="1531" height="190" viewBox="97 545 1531 190" fill="none" stroke="#222" stroke-width="1.300"><g stroke="#777" stroke-width="1.300"><rect x="101" y="555" width="10.500" height="12"/><path d="M101 561h10.500M104 558h4.500M104 564h4.500"/><path d="M102.500 555v-1.500h7.500v1.500"/></g><path d="M128.4 559.0V564.0a1.500 1.500 0 0 0 3 0V557.5a2.750 2.750 0 0 0 -5.500 0V563.8000000000001a4 4 0 0 0 8 0V560.0" stroke="#9a9a9a" stroke-width="1.300"/><path d="M152 554.3h6.800l4.500 4.500v8.800h-11.300z" stroke-width="1.400"/><path d="M130.3 611.8V616.8a1.500 1.500 0 0 0 3 0V610.3a2.750 2.750 0 0 0 -5.500 0V616.6a4 4 0 0 0 8 0V612.8" stroke="#222" stroke-width="1.300"/><path d="M154.2 607.4h6.800l4.500 4.500v8.800h-11.300z" stroke-width="1.400"/><rect x="209.700" y="607.9" width="12.300" height="12.300" stroke="#555" stroke-width="1.400" fill="#fff"/><path d="M212.300 614.3l2.700 2.700 4.700-5.600" stroke="#222" stroke-width="1.500"/><path d="M130.3 644.4V649.4a1.500 1.500 0 0 0 3 0V642.9a2.750 2.750 0 0 0 -5.500 0V649.2a4 4 0 0 0 8 0V645.4" stroke="#222" stroke-width="1.300"/><path d="M154.2 640.0h6.800l4.500 4.500v8.800h-11.300z" stroke-width="1.400"/><rect x="209.700" y="640.5" width="12.300" height="12.300" stroke="#555" stroke-width="1.400" fill="#fff"/><path d="M212.300 646.9l2.700 2.700 4.700-5.600" stroke="#222" stroke-width="1.500"/><path d="M130.3 677.3V682.3a1.500 1.500 0 0 0 3 0V675.8a2.750 2.750 0 0 0 -5.500 0V682.1a4 4 0 0 0 8 0V678.3" stroke="#222" stroke-width="1.300"/><path d="M154.2 672.9h6.800l4.500 4.500v8.800h-11.300z" stroke-width="1.400"/><rect x="209.700" y="673.4" width="12.300" height="12.300" stroke="#555" stroke-width="1.400" fill="#fff"/><path d="M212.300 679.8l2.700 2.700 4.700-5.600" stroke="#222" stroke-width="1.500"/><path d="M130.3 709.8V714.8a1.500 1.500 0 0 0 3 0V708.3a2.750 2.750 0 0 0 -5.500 0V714.6a4 4 0 0 0 8 0V710.8" stroke="#222" stroke-width="1.300"/><path d="M154.2 705.4h6.800l4.500 4.500v8.800h-11.300z" stroke-width="1.400"/><rect x="209.700" y="705.9" width="12.300" height="12.300" stroke="#555" stroke-width="1.400" fill="#fff"/><path d="M212.300 712.3l2.700 2.700 4.700-5.600" stroke="#222" stroke-width="1.500"/><rect x="875" y="607.9" width="12.300" height="12.300" stroke="#b9b9b9" stroke-width="1.300" fill="#fff"/><rect x="875" y="640.5" width="12.300" height="12.300" stroke="#333" stroke-width="1.400" fill="#fff"/><path d="M877.600 646.9l2.700 2.700 4.700-5.600" stroke="#222" stroke-width="1.500"/><rect x="875" y="673.4" width="12.300" height="12.300" stroke="#b9b9b9" stroke-width="1.300" fill="#fff"/><rect x="875" y="705.9" width="12.300" height="12.300" stroke="#b9b9b9" stroke-width="1.300" fill="#fff"/><path d="M103.500 705.500l5 5-5 5" stroke="#555" stroke-width="1.500"/></svg>
<!-- BOTTOM -->
<div class="abs" style="left:0px;top:982.7px;width:1701px;height:34.5px;background:#027acc;"></div>
<div class="t" style="left:47.5px;top:990px;line-height:18px;font-size:16.5px;color:#fff;font-weight:700;transform:scaleX(0.8915);transform-origin:0 0;">Your product is in trial mode. Only two concurrent users are allowed.</div>
<div class="t" style="left:1584.0px;top:990px;line-height:18px;font-size:16.5px;color:#fff;font-weight:700;transform:scaleX(0.8932);transform-origin:0 0;">ACTIVATE</div>
<svg style="left:17px;top:989px" width="22" height="20" viewBox="0 0 22 20" fill="none" stroke="#fff" stroke-width="1.500"><path d="M1.500 1.500h16v11.500h-3.500v3.800l-3.800-3.800h-8.700z"/><path d="M4.500 5.300h10M4.500 8.800h10" stroke-width="1.300"/></svg>
<div class="abs" style="left:0px;top:1017.2px;width:1701px;height:62.8px;background:#fff;"></div>
<div class="abs" style="left:268px;top:1025px;width:1px;height:55px;background:#c8c8c8;"></div>
<svg style="left:24px;top:1038px" width="16" height="20" viewBox="0 0 16 20" fill="#fff" stroke="#8a8a8a" stroke-width="1.200"><path d="M1 1h8.500l4.500 4.500v13h-13z"/><path d="M9.500 1v4.500h4.500" /></svg>
<div class="t" style="left:55.5px;top:1040px;line-height:17px;font-size:15px;color:#3c4043;transform:scaleX(0.9178);transform-origin:0 0;">K2 CO Retail Tax T....xml</div>
<svg style="left:234px;top:1043px" width="14" height="10" viewBox="0 0 14 10" fill="none" stroke="#444" stroke-width="1.600"><path d="M1.500 7.500l5.300-5.300 5.300 5.300"/></svg>
<div class="abs" style="left:1572px;top:1029.5px;width:88px;height:36px;background:#fff;border:1px solid #dadce0;border-radius:4px;"></div>
<div class="t" style="left:1590.0px;top:1039px;line-height:17px;font-size:15px;color:#1a66d0;transform:scaleX(0.9083);transform-origin:0 0;">Show all</div>
<svg style="left:1674px;top:1042px" width="13" height="13" viewBox="0 0 13 13" fill="none" stroke="#444" stroke-width="1.600"><path d="M1.500 1.500l9.500 9.500M11 1.500l-9.500 9.500"/></svg>
</body></html>
